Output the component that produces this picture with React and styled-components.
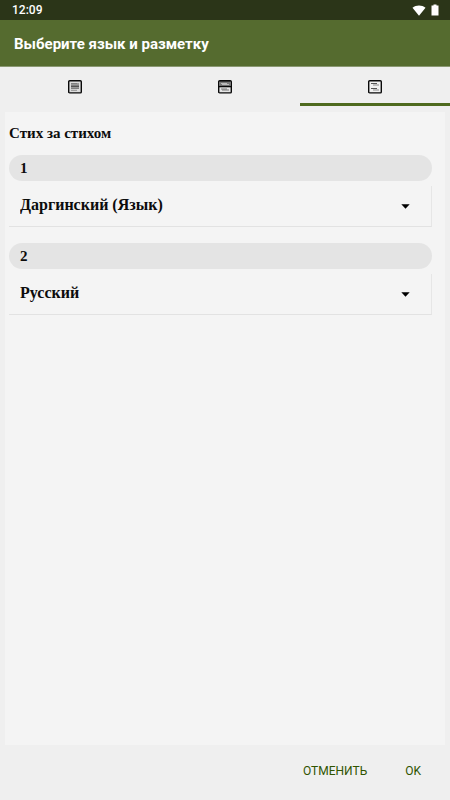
import { useState } from "react";
import styled, { createGlobalStyle } from "styled-components";

const GlobalStyle = createGlobalStyle`
    * {
        box-sizing: border-box;
    }

    body {
        margin: 0;
        background-color: #efefef;
        font-family: Roboto, sans-serif;
    }
`;

const Screen = styled.div`
    min-height: 100vh;
    display: flex;
    flex-direction: column;
`;

const StatusBar = styled.div`
    height: 20px;
    padding: 0 11px 0 12px;
    display: flex;
    align-items: center;
    justify-content: space-between;
    background-color: #2b3518;
    color: #ffffff;
    font-size: 12px;
    line-height: 20px;
    font-weight: 500;
`;

const StatusIcons = styled.div`
    display: flex;
    align-items: center;
    gap: 5px;

    svg {
        display: block;
    }
`;

const TitleBar = styled.header`
    height: 47px;
    padding: 2px 14px 0;
    display: flex;
    align-items: center;
    background-color: #556b2f;
    border-bottom: 1px solid #8a9873;
`;

const Title = styled.h1`
    margin: 0;
    color: #ffffff;
    font-size: 15px;
    line-height: 20px;
    font-weight: 700;
`;

const Tabs = styled.div`
    height: 39px;
    display: flex;
`;

const Tab = styled.button`
    flex: 1;
    padding: 3px 0 0;
    display: flex;
    align-items: center;
    justify-content: center;
    background: none;
    border: none;
    border-bottom: 3px solid ${(props) => (props.$active ? "#4e6a1e" : "transparent")};
    cursor: pointer;
`;

const Panel = styled.main`
    flex: 1;
    margin: 6px 5px 0;
    padding: 11px 13px 16px 4px;
    background-color: #f4f4f4;
    color: #0c0c0c;
    font-family: "Liberation Serif", serif;
`;

const Heading = styled.h2`
    margin: 0 0 12px;
    font-size: 15px;
    line-height: 20px;
    font-weight: 700;
`;

const Field = styled.div`
    margin-bottom: 16px;
`;

const Pill = styled.label`
    display: block;
    height: 26px;
    padding: 0 11px;
    border-radius: 13px;
    background-color: #e4e4e4;
    font-size: 15px;
    line-height: 26px;
    font-weight: 700;
`;

const SelectBox = styled.div`
    position: relative;
    height: 41px;
    margin: 5px 0 0;
    border-right: 1px solid #e6e6e6;
    border-bottom: 1px solid #e2e2e2;
`;

const Select = styled.select`
    appearance: none;
    display: block;
    width: 100%;
    height: 100%;
    padding: 0 36px 3px 11px;
    border: none;
    background: transparent;
    color: #0c0c0c;
    font-family: inherit;
    font-size: 16px;
    line-height: 24px;
    font-weight: 700;
`;

const Arrow = styled.svg`
    position: absolute;
    top: 18px;
    right: 21px;
    pointer-events: none;
`;

const Actions = styled.footer`
    height: 55px;
    padding: 0 21px 4px;
    display: flex;
    align-items: center;
    justify-content: flex-end;
    gap: 22px;
`;

const ActionButton = styled.button`
    padding: 8px;
    background: none;
    border: none;
    color: #2f5400;
    font-family: inherit;
    font-size: 12px;
    line-height: 16px;
    font-weight: 400;
    text-transform: uppercase;
    cursor: pointer;
`;

const SingleIcon = () => (
    <svg width="14" height="14" viewBox="0 0 14 14" aria-hidden="true">
        <rect x="0.7" y="0.7" width="12.6" height="12.2" rx="1" fill="#dedede" stroke="#0a0a0a" strokeWidth="1.4" />
        <path d="M3 3h8v6H3z" fill="#9a9a9a" />
        <path d="M3 3.5h6M3 5.5h8M3 8.5h8" stroke="#808080" />
        <path d="M3 6.5h8" stroke="#555555" />
        <path d="M3 10.3h6" stroke="#909090" />
    </svg>
);

const SplitIcon = () => (
    <svg width="14" height="14" viewBox="0 0 14 14" aria-hidden="true">
        <rect x="0.7" y="0.7" width="12.6" height="12.2" rx="1" fill="#e6e6e6" stroke="#0a0a0a" strokeWidth="1.4" />
        <rect x="1" y="1" width="12" height="5" fill="#777777" />
        <path d="M1 1.5h12" stroke="#333333" />
        <path d="M3 3.5h6M4 4.5h7" stroke="#bbbbbb" />
        <path d="M1 6.6h12" stroke="#0a0a0a" strokeWidth="1.4" />
        <path d="M3 9h6M4 10h7" stroke="#777777" />
    </svg>
);

const VerseIcon = () => (
    <svg width="14" height="14" viewBox="0 0 14 14" aria-hidden="true">
        <rect x="0.7" y="0.7" width="12.6" height="12.2" rx="1" fill="#f2f2f2" stroke="#0a0a0a" strokeWidth="1.4" />
        <path d="M3 3.5h6M3 8.5h6" stroke="#555555" />
        <path d="M5 5h6M5 10h6" stroke="#888888" />
    </svg>
);

const tabs = [
    { id: "single", label: "Одна панель", Icon: SingleIcon },
    { id: "split", label: "Две панели", Icon: SplitIcon },
    { id: "verse", label: "Стих за стихом", Icon: VerseIcon },
];

const languages = ["Даргинский (Язык)", "Русский"];

const LanguageField = ({ number, value, onChange }) => (
    <Field>
        <Pill htmlFor={`language-${number}`}>{number}</Pill>
        <SelectBox>
            <Select id={`language-${number}`} value={value} onChange={(e) => onChange(e.target.value)}>
                {languages.map((language) => (
                    <option key={language} value={language}>{language}</option>
                ))}
            </Select>
            <Arrow width="9" height="5" viewBox="0 0 9 5" aria-hidden="true">
                <path d="M0.3 0.3h8.4L4.5 4.7z" fill="#000000" />
            </Arrow>
        </SelectBox>
    </Field>
);

const App = () => {
    const [activeTab, setActiveTab] = useState("verse");
    const [first, setFirst] = useState(languages[0]);
    const [second, setSecond] = useState(languages[1]);

    return (
        <Screen>
            <GlobalStyle />
            <StatusBar>
                <span>12:09</span>
                <StatusIcons>
                    <svg width="14" height="11" viewBox="0 0 14 11" aria-hidden="true">
                        <path d="M0.5 2.8C4.2 -0.3 9.8 -0.3 13.5 2.8L7 10.8z" fill="#ffffff" />
                    </svg>
                    <svg width="8" height="12" viewBox="0 0 8 12" aria-hidden="true">
                        <path d="M2.5 0.5h3v1H7.5v10h-7v-10h2z" fill="#ffffff" />
                    </svg>
                </StatusIcons>
            </StatusBar>
            <TitleBar>
                <Title>Выберите язык и разметку</Title>
            </TitleBar>
            <Tabs role="tablist">
                {tabs.map(({ id, label, Icon }) => (
                    <Tab
                        key={id}
                        type="button"
                        role="tab"
                        aria-label={label}
                        aria-selected={activeTab === id}
                        $active={activeTab === id}
                        onClick={() => setActiveTab(id)}
                    >
                        <Icon />
                    </Tab>
                ))}
            </Tabs>
            <Panel>
                <Heading>Стих за стихом</Heading>
                <LanguageField number={1} value={first} onChange={setFirst} />
                <LanguageField number={2} value={second} onChange={setSecond} />
            </Panel>
            <Actions>
                <ActionButton type="button">Отменить</ActionButton>
                <ActionButton type="button">OK</ActionButton>
            </Actions>
        </Screen>
    );
}

export default App;
